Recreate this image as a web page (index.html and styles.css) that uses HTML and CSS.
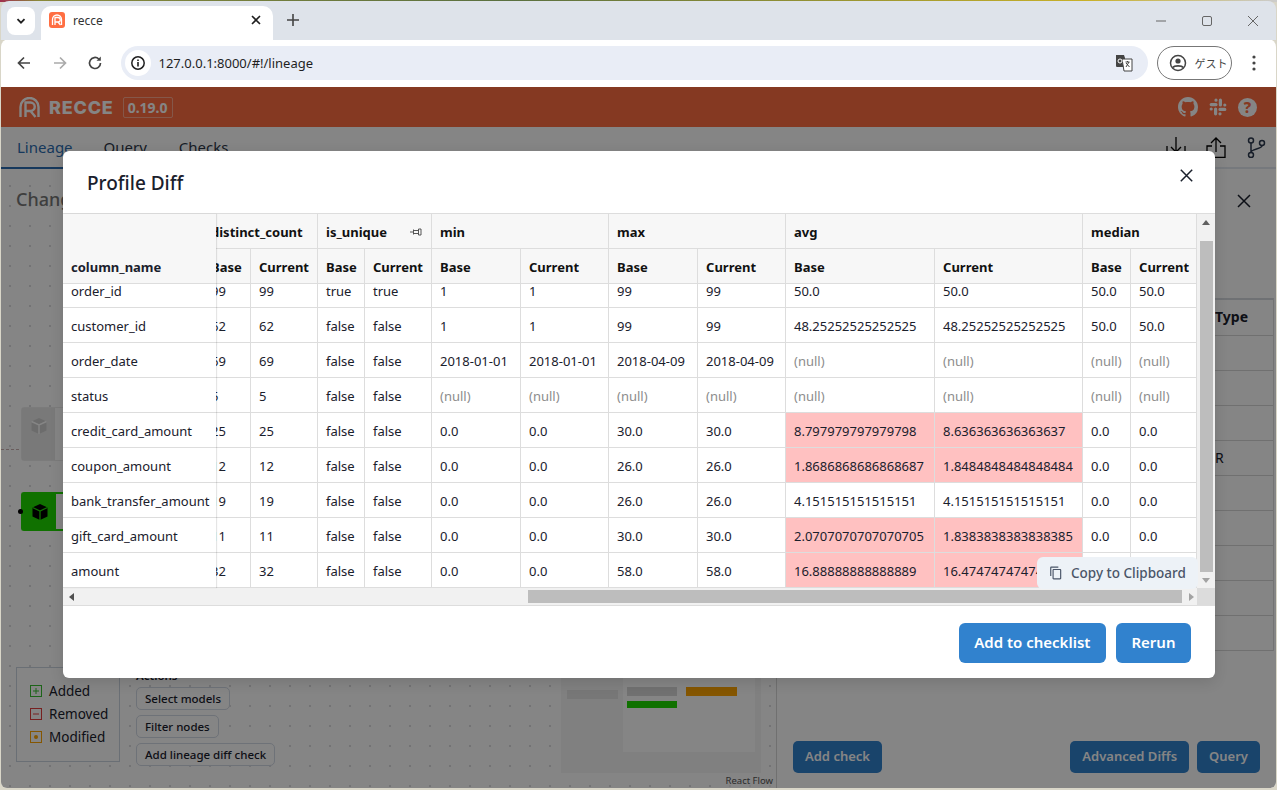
FILE: index.html
```html
<!DOCTYPE html>
<html lang="en">
<head>
<meta charset="utf-8">
<title>recce</title>
<link rel="stylesheet" href="styles.css">
</head>
<body>
<div class="window">
  <div class="tabstrip">
    <div class="tabmenu"><svg width="12" height="12" viewBox="0 0 12 12"><path d="M2.5 4.2 6 7.7l3.5-3.5" fill="none" stroke="#1f1f1f" stroke-width="1.8"/></svg></div>
    <div class="tab">
      <svg class="favicon" width="16" height="16" viewBox="0 0 16 16"><rect width="16" height="16" rx="3" fill="#ff6e42"/><path d="M3.5 13V7.5a4.5 4.5 0 0 1 9 0V13" fill="none" stroke="#fff" stroke-width="1.3"/><path d="M6 13V5.5h3a2 2 0 0 1 0 4.5H6m3 0 2.5 3" fill="none" stroke="#fff" stroke-width="1.3"/></svg>
      <span class="tabtitle">recce</span>
      <svg class="tabclose" width="10" height="10" viewBox="0 0 10 10"><path d="M1 1l8 8M9 1 1 9" stroke="#1f1f1f" stroke-width="1.6"/></svg>
    </div>
    <svg class="newtab" width="12" height="12" viewBox="0 0 12 12"><path d="M6 0v12M0 6h12" stroke="#444" stroke-width="1.6"/></svg>
    <div class="winbtns">
      <svg width="12" height="12" viewBox="0 0 12 12"><path d="M1 6h10" stroke="#666" stroke-width="1"/></svg>
      <svg width="12" height="12" viewBox="0 0 12 12"><rect x="1.5" y="1.5" width="9" height="9" rx="1.5" fill="none" stroke="#666"/></svg>
      <svg width="12" height="12" viewBox="0 0 12 12"><path d="M1 1l10 10M11 1 1 11" stroke="#666"/></svg>
    </div>
  </div>
  <div class="toolbar">
    <svg class="navicon" width="16" height="16" viewBox="0 0 16 16"><path d="M14 8H2.5M8 2.5 2.5 8 8 13.5" fill="none" stroke="#444" stroke-width="1.7"/></svg>
    <svg class="navicon" width="16" height="16" viewBox="0 0 16 16"><path d="M2 8h11.5M8 2.5 13.5 8 8 13.5" fill="none" stroke="#aaa" stroke-width="1.7"/></svg>
    <svg class="navicon" width="16" height="16" viewBox="0 0 16 16"><path d="M13.5 8A5.5 5.5 0 1 1 11.8 4" fill="none" stroke="#444" stroke-width="1.7"/><path d="M13.8 1.5v4.3H9.5z" fill="#444"/></svg>
    <div class="omnibox">
      <span class="infochip"><svg width="16" height="16" viewBox="0 0 16 16"><circle cx="8" cy="8" r="6.2" fill="none" stroke="#1f1f1f" stroke-width="1.5"/><path d="M8 7v4.5M8 4.4v1.5" stroke="#1f1f1f" stroke-width="1.6"/></svg></span>
      <span class="url">127.0.0.1:8000/#!/lineage</span>
      <svg class="translate" width="18" height="18" viewBox="0 0 18 18"><path d="M1 1h8l1 3v9H2a1 1 0 0 1-1-1z" fill="#444"/><path d="M7 5h10v12H9z" fill="#fff" stroke="#444"/><path d="M10.5 8h4M12.5 7v1M11 13l3-5M11 9l3.5 4" stroke="#444" fill="none"/><circle cx="5" cy="7" r="2" fill="none" stroke="#fff"/></svg>
    </div>
    <div class="profile">
      <svg width="20" height="20" viewBox="0 0 20 20"><circle cx="10" cy="10" r="7.5" fill="none" stroke="#444" stroke-width="1.5"/><circle cx="10" cy="8" r="2.6" fill="#444"/><path d="M4.8 14.5c1.5-2.2 9-2.2 10.4 0" fill="none" stroke="#444" stroke-width="1.8"/></svg>
      <span class="guest">ゲスト</span>
    </div>
    <svg class="kebab" width="4" height="16" viewBox="0 0 4 16"><circle cx="2" cy="2" r="1.6" fill="#444"/><circle cx="2" cy="8" r="1.6" fill="#444"/><circle cx="2" cy="14" r="1.6" fill="#444"/></svg>
  </div>

  <div class="app">
    <header class="brandbar">
      <svg class="logo" width="21" height="21" viewBox="0 0 21 21"><path d="M1.5 20V10a9 9 0 0 1 18 0v10" fill="none" stroke="#fff" stroke-width="2.4"/><path d="M6.5 20V5.5h5a4 4 0 0 1 0 8.5h-5m5 0 5 6" fill="none" stroke="#fff" stroke-width="2.4"/></svg>
      <span class="wordmark">RECCE</span>
      <span class="version">0.19.0</span>
      <div class="brandicons">
        <svg width="20" height="20" viewBox="0 0 16 16"><path fill="#fff" d="M8 0C3.58 0 0 3.58 0 8c0 3.54 2.29 6.53 5.47 7.63.4.07.55-.17.55-.38 0-.19-.01-.82-.01-1.49-2.01.37-2.53-.49-2.69-.94-.09-.23-.48-.94-.82-1.13-.28-.15-.68-.52-.01-.53.63-.01 1.08.58 1.23.82.72 1.21 1.87.87 2.33.66.07-.52.28-.87.51-1.07-1.78-.2-3.64-.89-3.64-3.95 0-.87.31-1.59.82-2.15-.08-.2-.36-1.02.08-2.12 0 0 .67-.21 2.2.82.64-.18 1.32-.27 2-.27.68 0 1.36.09 2 .27 1.53-1.04 2.2-.82 2.2-.82.44 1.1.16 1.92.08 2.12.51.56.82 1.27.82 2.15 0 3.07-1.87 3.75-3.65 3.95.29.25.54.73.54 1.48 0 1.07-.01 1.93-.01 2.2 0 .21.15.46.55.38A8.013 8.013 0 0016 8c0-4.42-3.58-8-8-8z"/></svg>
        <svg width="18" height="18" viewBox="0 0 18 18"><g stroke="#fff" stroke-width="3.2" stroke-linecap="round" fill="none"><path d="M7 2.2v0M7 6.6H2.2"/><path d="M15.8 7h0M11.4 7V2.2"/><path d="M11 15.8v0M11 11.4h4.8"/><path d="M2.2 11h0M6.6 11v4.8"/></g></svg>
        <span class="help">?</span>
      </div>
    </header>
    <nav class="tabsbar">
      <span class="apptab active">Lineage</span>
      <span class="apptab">Query</span>
      <span class="apptab">Checks</span>
      <div class="tabactions">
        <svg width="20" height="21" viewBox="0 0 20 21"><path d="M10 0v15M5 10l5 5 5-5M1 9v11.5h18V9" fill="none" stroke="#000" stroke-width="1.3"/></svg>
        <svg width="20" height="21" viewBox="0 0 20 21"><path d="M10 15V1M5 6l5-5 5 5M6 9H1v11.5h18V9h-5" fill="none" stroke="#000" stroke-width="1.3"/></svg>
        <svg width="20" height="21" viewBox="0 0 20 21"><g fill="none" stroke="#2d3a50" stroke-width="1.5"><circle cx="5" cy="3.5" r="2.5"/><circle cx="16" cy="6" r="2.5"/><circle cx="5" cy="18" r="2.5"/><path d="M5 6v9.5M16 8.5c0 4-11 3-11 7"/></g></svg>
      </div>
    </nav>
    <main class="workspace">
      <section class="canvas">
        <h2 class="canvastitle">Change Analysis</h2>
        <div class="edge"></div>
        <div class="node node-faded"><span class="nodeicon"><svg width="18" height="18" viewBox="0 0 18 18"><path d="M9 1l7.5 3.5v9L9 17l-7.5-3.5v-9z" fill="#cfcfcf"/><path d="M1.5 4.5 9 8l7.5-3.5M9 8v9" fill="none" stroke="#fff" stroke-width="1.4"/></svg></span></div>
        <div class="node node-added"><i class="handle"></i><span class="nodeicon"><svg width="18" height="18" viewBox="0 0 18 18"><path d="M9 1l7.5 3.5v9L9 17l-7.5-3.5v-9z" fill="#000"/><path d="M1.5 4.5 9 8l7.5-3.5M9 8v9" fill="none" stroke="#1fd800" stroke-width="1.3"/></svg></span></div>
        <div class="legend">
          <div class="legenditem"><svg width="12" height="12" viewBox="0 0 12 12"><rect x=".5" y=".5" width="11" height="11" fill="none" stroke="#38c030"/><path d="M3 6h6M6 3v6" stroke="#38c030"/></svg>Added</div>
          <div class="legenditem"><svg width="12" height="12" viewBox="0 0 12 12"><rect x=".5" y=".5" width="11" height="11" fill="none" stroke="#e53e3e"/><path d="M3 6h6" stroke="#e53e3e"/></svg>Removed</div>
          <div class="legenditem"><svg width="12" height="12" viewBox="0 0 12 12"><rect x=".5" y=".5" width="11" height="11" fill="none" stroke="#ffa502"/><circle cx="6" cy="6" r="2" fill="#ffa502"/></svg>Modified</div>
        </div>
        <div class="actions">
          <span class="actionslabel">Actions</span>
          <span class="actionbtn">Select models</span>
          <span class="actionbtn">Filter nodes</span>
          <span class="actionbtn">Add lineage diff check</span>
        </div>
        <div class="minimap">
          <div class="miniview"></div>
          <i class="mini mini-a"></i><i class="mini mini-b"></i><i class="mini mini-c"></i><i class="mini mini-d"></i>
        </div>
        <span class="attribution">React Flow</span>
      </section>
      <aside class="panel">
        <div class="panelclose"><svg width="14" height="14" viewBox="0 0 14 14"><path d="M1 1l12 12M13 1 1 13" stroke="#1a202c" stroke-width="1.5"/></svg></div>
        <div class="typecol">
          <div class="typecell typehead">Type</div>
          <div class="typecell"></div><div class="typecell"></div><div class="typecell"></div>
          <div class="typecell">R</div>
          <div class="typecell"></div><div class="typecell"></div><div class="typecell"></div><div class="typecell"></div><div class="typecell"></div>
        </div>
        <div class="panelbtns">
          <span class="bluebtn">Add check</span>
          <span class="spacer"></span>
          <span class="bluebtn">Advanced Diffs</span>
          <span class="bluebtn">Query</span>
        </div>
      </aside>
    </main>

    <div class="overlay">
      <div class="modal">
        <div class="modalhead">
          <h1 class="modaltitle">Profile Diff</h1>
          <svg class="modalclose" width="13" height="13" viewBox="0 0 13 13"><path d="M.8.8l11.4 11.4M12.2.8.8 12.2" stroke="#1a202c" stroke-width="1.5"/></svg>
        </div>
        <div class="grid">
          <div class="gridtop">
            <div class="frozen">
              <div class="frozenhead">column_name</div>
              <div class="viewport">
                <table class="t tf"><tbody>
                  <tr><td>order_id</td></tr><tr><td>customer_id</td></tr><tr><td>order_date</td></tr><tr><td>status</td></tr><tr><td>credit_card_amount</td></tr><tr><td>coupon_amount</td></tr><tr><td>bank_transfer_amount</td></tr><tr><td>gift_card_amount</td></tr><tr><td>amount</td></tr>
                </tbody></table>
              </div>
            </div>
            <div class="scrollpane">
              <table class="t ts">
                <colgroup><col class="c48"><col class="c67"><col class="c47"><col class="c67"><col class="c89"><col class="c88"><col class="c89"><col class="c88"><col class="c149"><col class="c148"><col class="c48"><col class="c66"></colgroup>
                <thead>
                  <tr><th colspan="2">distinct_count</th><th colspan="2" class="pinned">is_unique<svg class="pin" width="12" height="10" viewBox="0 0 12 10"><path d="M0 5h3M3.5 2.5v5M3.5 3.5h5M3.5 6.5h5M8.5 2v6H11V2z" fill="none" stroke="#444" stroke-width=".9"/></svg></th><th colspan="2">min</th><th colspan="2">max</th><th colspan="2">avg</th><th colspan="2">median</th></tr>
                  <tr><th>Base</th><th>Current</th><th>Base</th><th>Current</th><th>Base</th><th>Current</th><th>Base</th><th>Current</th><th>Base</th><th>Current</th><th>Base</th><th>Current</th></tr>
                </thead>
              </table>
              <div class="viewport">
                <table class="t ts">
                  <colgroup><col class="c48"><col class="c67"><col class="c47"><col class="c67"><col class="c89"><col class="c88"><col class="c89"><col class="c88"><col class="c149"><col class="c148"><col class="c48"><col class="c66"></colgroup>
                  <tbody>
                    <tr><td>99</td><td>99</td><td>true</td><td>true</td><td>1</td><td>1</td><td>99</td><td>99</td><td>50.0</td><td>50.0</td><td>50.0</td><td>50.0</td></tr>
                    <tr><td>62</td><td>62</td><td>false</td><td>false</td><td>1</td><td>1</td><td>99</td><td>99</td><td>48.25252525252525</td><td>48.25252525252525</td><td>50.0</td><td>50.0</td></tr>
                    <tr><td>69</td><td>69</td><td>false</td><td>false</td><td>2018-01-01</td><td>2018-01-01</td><td>2018-04-09</td><td>2018-04-09</td><td class="nul">(null)</td><td class="nul">(null)</td><td class="nul">(null)</td><td class="nul">(null)</td></tr>
                    <tr><td>5</td><td>5</td><td>false</td><td>false</td><td class="nul">(null)</td><td class="nul">(null)</td><td class="nul">(null)</td><td class="nul">(null)</td><td class="nul">(null)</td><td class="nul">(null)</td><td class="nul">(null)</td><td class="nul">(null)</td></tr>
                    <tr><td>25</td><td>25</td><td>false</td><td>false</td><td>0.0</td><td>0.0</td><td>30.0</td><td>30.0</td><td class="diff">8.797979797979798</td><td class="diff">8.636363636363637</td><td>0.0</td><td>0.0</td></tr>
                    <tr><td>12</td><td>12</td><td>false</td><td>false</td><td>0.0</td><td>0.0</td><td>26.0</td><td>26.0</td><td class="diff">1.8686868686868687</td><td class="diff">1.8484848484848484</td><td>0.0</td><td>0.0</td></tr>
                    <tr><td>19</td><td>19</td><td>false</td><td>false</td><td>0.0</td><td>0.0</td><td>26.0</td><td>26.0</td><td>4.151515151515151</td><td>4.151515151515151</td><td>0.0</td><td>0.0</td></tr>
                    <tr><td>11</td><td>11</td><td>false</td><td>false</td><td>0.0</td><td>0.0</td><td>30.0</td><td>30.0</td><td class="diff">2.0707070707070705</td><td class="diff">1.8383838383838385</td><td>0.0</td><td>0.0</td></tr>
                    <tr><td>32</td><td>32</td><td>false</td><td>false</td><td>0.0</td><td>0.0</td><td>58.0</td><td>58.0</td><td class="diff">16.88888888888889</td><td class="diff">16.474747474747474</td><td>0.0</td><td>0.0</td></tr>
                  </tbody>
                </table>
              </div>
            </div>
            <div class="vbar">
              <svg class="arrow" width="8" height="5" viewBox="0 0 8 5"><path d="M4 0l4 5H0z" fill="#606060"/></svg>
              <div class="vtrack"><div class="vthumb"></div></div>
              <svg class="arrow" width="8" height="5" viewBox="0 0 8 5"><path d="M4 5 0 0h8z" fill="#a3a3a3"/></svg>
            </div>
          </div>
          <div class="hbar">
            <svg class="arrow" width="5" height="8" viewBox="0 0 5 8"><path d="M0 4l5-4v8z" fill="#505050"/></svg>
            <div class="htrack"><div class="hthumb"></div></div>
            <svg class="arrow" width="5" height="8" viewBox="0 0 5 8"><path d="M5 4 0 0v8z" fill="#a3a3a3"/></svg>
            <span class="corner"></span>
          </div>
          <div class="copybtn">
            <svg width="14" height="14" viewBox="0 0 24 24"><path fill="#4a5568" d="M16 1H4c-1.1 0-2 .9-2 2v14h2V3h12V1zm3 4H8c-1.1 0-2 .9-2 2v14c0 1.1.9 2 2 2h11c1.1 0 2-.9 2-2V7c0-1.1-.9-2-2-2zm0 16H8V7h11v14z"/></svg>
            Copy to Clipboard
          </div>
        </div>
        <div class="modalfoot">
          <span class="primary">Add to checklist</span>
          <span class="primary">Rerun</span>
        </div>
      </div>
    </div>
  </div>
</div>
</body>
</html>
```
FILE: styles.css
```css
* { box-sizing: border-box; }
html, body { margin: 0; padding: 0; height: 100%; overflow: hidden; }
body { font-family: "Noto Sans", "Open Sans", sans-serif; color: #1a202c; background: #d9d6c8; }
.window { width: 1277px; height: 790px; display: flex; flex-direction: column; position: relative; padding: 1px 1px 2px; background: linear-gradient(90deg, #a03050, #8a8a3a 3%, #5a7040 40%, #c8b028 85%, #ccc) top / 100% 2px no-repeat #d9d6c8; }

/* browser chrome */
.tabstrip { height: 39px; flex: none; background: #dee3ea; display: flex; align-items: flex-end; position: relative; padding-left: 6px; border-radius: 8px 8px 0 0; }
.tabmenu { width: 28px; height: 28px; margin-bottom: 5px; background: #fff; border-radius: 8px; display: flex; align-items: center; justify-content: center; }
.tab { width: 232px; height: 34px; margin-left: 6px; background: #fff; border-radius: 10px 10px 0 0; display: flex; align-items: center; padding: 0 8px; margin-bottom: 0; }
.favicon { margin-right: 8px; margin-top: -6px; }
.tabtitle { font-size: 12px; color: #333; flex: 1; margin-top: -6px; }
.tabclose { margin-right: 4px; margin-top: -6px; }
.newtab { margin: 0 0 14px 14px; }
.winbtns { margin-left: auto; display: flex; gap: 34px; padding-right: 17px; margin-bottom: 13px; }
.toolbar { height: 48px; flex: none; background: #fff; display: flex; align-items: center; padding: 0 0 0 15px; border-radius: 8px 8px 0 0; margin-top: -1px; }
.navicon { margin-right: 19.5px; }
.omnibox { width: 1027px; height: 34px; margin-left: -2px; background: #e9edf6; border-radius: 17px; display: flex; align-items: center; padding-left: 4px; }
.infochip { width: 26px; height: 26px; background: #fff; border-radius: 50%; display: flex; align-items: center; justify-content: center; }
.url { font-size: 13px; color: #1f1f1f; margin-left: 8px; flex: 1; }
.translate { margin-right: 15px; }
.profile { width: 75px; height: 34px; margin-left: 9px; border: 1px solid #777; border-radius: 17px; display: flex; align-items: center; padding-left: 10px; gap: 7px; }
.guest { font-family: "Noto Sans CJK JP", sans-serif; font-size: 11px; color: #444; }
.kebab { margin-left: 20px; }

/* app */
.app { flex: 1; position: relative; background: #fff; display: flex; flex-direction: column; min-height: 0; border-radius: 0 0 6px 6px; overflow: hidden; }
.brandbar { height: 40px; flex: none; background: #ff6e42; display: flex; align-items: center; padding-left: 18px; color: #fff; }
.wordmark { font-family: "Inter", sans-serif; font-weight: 800; font-size: 18px; letter-spacing: .8px; margin-left: 9px; }
.version { margin-left: 9px; border: 1px solid rgba(255,255,255,.4); border-radius: 2px; font-size: 14px; font-weight: 700; padding: 0 4px; height: 21px; line-height: 20px; }
.brandicons { margin-left: auto; display: flex; align-items: center; gap: 11px; padding-right: 19px; }
.help { width: 19px; height: 19px; background: #fff; color: #ff6e42; border-radius: 50%; font-weight: 800; font-size: 15px; line-height: 19px; text-align: center; }
.tabsbar { height: 42px; flex: none; display: flex; align-items: flex-start; border-bottom: 2px solid #e2e8f0; gap: 0; position: relative; }
.apptab { font-size: 15px; padding: 10px 16px 0; height: 42px; color: #2d3748; }
.apptab.active { color: #2b6cb0; border-bottom: 2px solid #2b6cb0; margin-right: -1px; }
.tabactions { margin-left: auto; display: flex; gap: 20px; padding: 10px 10px 0 0; }
.workspace { flex: 1; display: flex; min-height: 0; }
.canvas { width: 776px; flex: none; position: relative; border-right: 1px solid #d6d6d6; background-image: radial-gradient(circle, #91919a 0.5px, transparent .8px); background-size: 20px 20px; background-position: -1px 7px; }
.canvastitle { margin: 18px 0 0 15px; font-size: 18px; font-weight: 500; color: #777; }
.edge { position: absolute; left: 0; top: 280px; width: 63px; border-top: 1px dashed #c9b0b0; }
.node { position: absolute; left: 20px; width: 90px; border-radius: 3px; background: #fff; }
.node-faded { top: 238px; height: 54px; border: 1px solid #ececec; }
.node-added { top: 323px; height: 39px; border: 2px solid #1fd800; border-right: 0; }
.nodeicon { display: flex; justify-content: center; width: 33px; height: 100%; padding-top: 9px; }
.node-faded .nodeicon { background: #e8e8e8; }
.node-added .nodeicon { background: #1fd800; width: 33px; }
.handle { position: absolute; left: -5px; top: 15px; width: 5px; height: 5px; border-radius: 50%; background: #000; }
.legend { position: absolute; left: 15px; top: 498px; width: 104px; height: 95px; border: 1px solid #cbd5e0; background: #fff; padding: 13px 0 0 13px; display: flex; flex-direction: column; gap: 4px; font-size: 13.5px; color: #1a202c; }
.legenditem { display: flex; align-items: center; gap: 7px; height: 19px; }
.actions { position: absolute; left: 135px; top: 499px; display: flex; flex-direction: column; align-items: flex-start; gap: 5px; font-size: 11.5px; font-weight: 500; }
.actionslabel { height: 14px; font-weight: 600; }
.actionbtn { height: 23px; line-height: 21px; padding: 0 8px; border: 1px solid #d3dae6; border-radius: 5px; background: #fff; font-size: 11.5px; white-space: nowrap; }
.minimap { position: absolute; left: 560px; top: 449px; width: 200px; height: 155px; background: #f5f5f5; }
.miniview { position: absolute; left: 62px; top: 0; width: 132px; height: 134px; background: #fff; }
.mini { position: absolute; }
.mini-a { left: 6px; top: 72px; width: 51px; height: 9px; background: #e4e4e4; }
.mini-b { left: 66px; top: 69px; width: 50px; height: 9px; background: #d8d8d8; }
.mini-c { left: 125px; top: 69px; width: 51px; height: 9px; background: #ffa502; }
.mini-d { left: 66px; top: 83px; width: 50px; height: 7px; background: #1fd800; }
.attribution { position: absolute; right: 0; bottom: 1px; font-size: 9.5px; color: #555; background: rgba(255,255,255,.5); padding: 0 3px; }
.panel { flex: 1; position: relative; background: #fff; }
.panelclose { position: absolute; right: 25px; top: 25px; display: flex; }
.typecol { position: absolute; left: 0; top: 129px; width: 497px; border-top: 2px solid #d5d9df; border-right: 1px solid #ddd; }
.typecell { height: 35px; border-bottom: 1px solid #d6d6d6; padding-left: 438px; font-size: 14px; line-height: 34px; }
.typehead { font-weight: 700; height: 36px; }
.panelbtns { position: absolute; left: 16px; right: 16px; bottom: 15px; display: flex; gap: 8px; }
.spacer { flex: 1; }
.bluebtn { height: 32px; line-height: 31px; padding: 0 12px; background: #3182ce; color: #fff; font-weight: 600; font-size: 13px; border-radius: 5px; white-space: nowrap; }

/* modal */
.overlay { position: absolute; inset: 0; background: rgba(0,0,0,.48); padding: 64px 0 0 62px; }
.modal { width: 1152px; height: 527px; background: #fff; border-radius: 6px; display: flex; flex-direction: column; box-shadow: 0 4px 14px rgba(0,0,0,.12); overflow: hidden; }
.modalhead { height: 62px; flex: none; display: flex; align-items: center; justify-content: space-between; padding: 2px 22px 0 24px; }
.modaltitle { margin: 0; font-size: 19px; font-weight: 500; color: #1a202c; }
.modalclose { margin-top: -15px; }
.grid { position: relative; flex: none; height: 393px; border-top: 1px solid #ddd; border-bottom: 1px solid #ddd; font-size: 13px; }
.gridtop { display: flex; height: 374px; }
.frozen { width: 153px; flex: none; position: relative; z-index: 1; box-shadow: 1px 0 1px rgba(0,0,0,.1); background: #fff; }
.frozenhead { height: 70px; background: #f7f7f7; border-bottom: 1px solid #ddd; font-weight: 700; padding: 0 8px 7px; display: flex; align-items: flex-end; }
.viewport { height: 304px; overflow: hidden; }
.scrollpane { width: 981px; flex: none; overflow: hidden; }
.t { border-collapse: separate; border-spacing: 0; table-layout: fixed; }
.viewport .t { margin-top: -11px; }
.ts { margin-left: -13px; width: 994px; }
.tf { width: 153px; }
.t th, .t td { height: 35px; padding: 1px 8px 0; border-right: 1px solid #ddd; border-bottom: 1px solid #ddd; text-align: left; white-space: nowrap; overflow: hidden; }
.t th { background: #f7f7f7; font-weight: 700; color: #111; }
.t td { color: #1a202c; background: #fff; }
.t td.nul { color: #8c8c8c; }
.t td.diff { background: #ffc1c1; }
.tf td { border-right: 0; }
.pinned { position: relative; }
.pin { position: absolute; right: 9px; top: 13px; }
.c48 { width: 48px; } .c67 { width: 67px; } .c47 { width: 47px; } .c89 { width: 89px; } .c88 { width: 88px; } .c149 { width: 149px; } .c148 { width: 148px; } .c66 { width: 66px; }
.vbar { width: 18px; flex: none; background: #f1f1f1; display: flex; flex-direction: column; align-items: center; }
.vbar .arrow { margin: 6px 0; flex: none; }
.vtrack { flex: 1; width: 13px; padding: 10px 0 0; }
.vthumb { height: 331px; background: #bdbdbd; }
.hbar { height: 17px; background: #f1f1f1; display: flex; align-items: center; padding-left: 6px; }
.htrack { width: 1108px; height: 13px; padding-left: 454px; }
.hthumb { height: 13px; background: #bdbdbd; }
.hbar .arrow { flex: none; }
.hbar .arrow:last-of-type { margin-left: 7px; }
.corner { margin-left: auto; width: 18px; height: 17px; background: #dcdcdc; }
.copybtn { position: absolute; left: 974px; top: 343px; width: 161px; height: 32px; background: #edf2f7; border-radius: 6px; display: flex; align-items: center; gap: 8px; padding-left: 12px; font-size: 13.5px; font-weight: 500; color: #4a5568; z-index: 2; }
.modalfoot { flex: 1; display: flex; justify-content: flex-end; align-items: flex-start; gap: 10px; padding: 17px 24px 0 0; }
.primary { height: 40px; line-height: 38px; padding: 0 15.5px; background: #3182ce; color: #fff; font-size: 15px; font-weight: 600; border-radius: 6px; white-space: nowrap; }
```
